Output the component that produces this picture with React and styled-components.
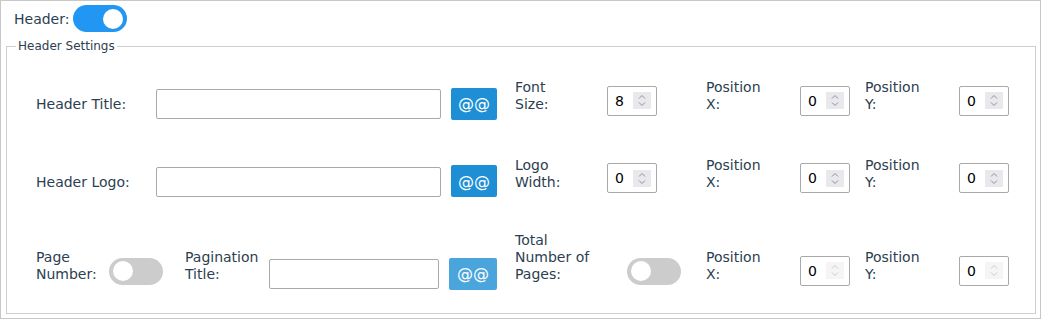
import React from 'react';
import styled, { createGlobalStyle } from 'styled-components';

const GlobalStyle = createGlobalStyle`
  body {
    margin: 0;
    background: #fff;
    font-family: "DejaVu Sans", "Liberation Sans", sans-serif;
    color: #2c3e50;
  }
  * { box-sizing: border-box; }
`;

const Page = styled.div`
  width: 1041px;
  height: 319px;
  border: 1px solid #c8c8c8;
  padding: 4px 4px 4px 5px;
  display: flex;
  flex-direction: column;
`;

const HeaderBar = styled.div`
  display: flex;
  align-items: center;
  gap: 4px;
  padding-left: 8px;
  font-size: 14px;
`;

const Settings = styled.fieldset`
  margin: 7px 0 0 0;
  min-width: 0;
  flex: 1;
  border: 1px solid #cfcfcf;
  padding: 26px 9px 0 29px;
  display: flex;
  flex-direction: column;
  gap: 37px;
`;

const Legend = styled.legend`
  font-size: 12px;
  padding: 0 2px;
  margin-left: -20px;
  color: #2c3e50;
`;

const Row = styled.div`
  display: flex;
  align-items: last baseline;
  font-size: 14px;
  margin-top: ${({ $mt }) => $mt || 0}px;
`;

const Label = styled.label`
  width: ${({ $w }) => $w}px;
  margin-left: ${({ $ml }) => $ml || 0}px;
  margin-right: ${({ $mr }) => $mr || 0}px;
  line-height: 17px;
  color: #2c3e50;
  flex-shrink: 0;
`;

const TextInput = styled.input`
  width: ${({ $w }) => $w}px;
  height: 30px;
  border: 1px solid #a9a9a9;
  border-radius: 2px;
  padding: 0 6px;
  font: 14px "DejaVu Sans", sans-serif;
  flex-shrink: 0;
`;

const NumberBox = styled.div`
  display: flex;
  align-items: center;
  width: 50px;
  height: 30px;
  border: 1px solid #a9a9a9;
  border-radius: 2px;
  padding: 0 5px 0 7px;
  flex-shrink: 0;
`;

const NumberValue = styled.input`
  flex: 1;
  min-width: 0;
  border: none;
  outline: none;
  padding: 0;
  font: 14px "DejaVu Sans", sans-serif;
  color: #000;
  background: transparent;
  -moz-appearance: textfield;
  &::-webkit-inner-spin-button,
  &::-webkit-outer-spin-button {
    -webkit-appearance: none;
    margin: 0;
  }
`;

const Spinner = styled.svg`
  flex-shrink: 0;
  opacity: ${({ $faded }) => ($faded ? 0.45 : 1)};
`;

const NumberField = ({ value, faded }) => (
  <NumberBox>
    <NumberValue type="number" defaultValue={value} />
    <Spinner $faded={faded} width="18" height="17" viewBox="0 0 18 17">
      <rect width="18" height="17" fill="#e9e9ed" />
      <path d="M6 6.5 L9 3.5 L12 6.5" fill="none" stroke="#8f8f9d" strokeWidth="1" />
      <path d="M6 10.5 L9 13.5 L12 10.5" fill="none" stroke="#8f8f9d" strokeWidth="1" />
    </Spinner>
  </NumberBox>
);

const TagButton = styled.button`
  width: ${({ $w }) => $w}px;
  height: 32px;
  margin-left: 10px;
  border: none;
  border-radius: 2px;
  background: #1e8fd5;
  opacity: ${({ $faded }) => ($faded ? 0.8 : 1)};
  color: #fff;
  font: 16px "DejaVu Sans", sans-serif;
  padding: 0;
  flex-shrink: 0;
`;

const Track = styled.span`
  display: flex;
  align-items: center;
  justify-content: ${({ $on }) => ($on ? 'flex-end' : 'flex-start')};
  width: 54px;
  height: 27px;
  padding: 0 4px;
  border-radius: 14px;
  background: ${({ $on }) => ($on ? '#2196f3' : '#cccccc')};
  margin-right: ${({ $mr }) => $mr || 0}px;
  flex-shrink: 0;
  ${({ $inRow }) => $inRow && 'align-self: flex-end; margin-bottom: 5px;'}
`;

const Knob = styled.span`
  width: 20px;
  height: 20px;
  border-radius: 50%;
  background: #fff;
`;

const Toggle = ({ on, mr, inRow }) => (
  <Track $on={on} $mr={mr} $inRow={inRow}>
    <Knob />
  </Track>
);

const Positions = ({ faded, ml = 49 }) => (
  <>
    <Label $w={60} $ml={ml} $mr={34}>Position X:</Label>
    <NumberField value={0} faded={faded} />
    <Label $w={60} $ml={15} $mr={34}>Position Y:</Label>
    <NumberField value={0} faded={faded} />
  </>
);

export default function App() {
  return (
    <>
      <GlobalStyle />
      <Page>
        <HeaderBar>
          <span>Header:</span>
          <Toggle on />
        </HeaderBar>
        <Settings>
          <Legend>Header Settings</Legend>
          <Row>
            <Label $w={120}>Header Title:</Label>
            <TextInput $w={285} />
            <TagButton $w={46}>@@</TagButton>
            <Label $w={60} $ml={18} $mr={32}>Font Size:</Label>
            <NumberField value={8} />
            <Positions />
          </Row>
          <Row>
            <Label $w={120}>Header Logo:</Label>
            <TextInput $w={285} />
            <TagButton $w={46}>@@</TagButton>
            <Label $w={60} $ml={18} $mr={32}>Logo Width:</Label>
            <NumberField value={0} />
            <Positions />
          </Row>
          <Row $mt={-2}>
            <Label $w={70} $mr={3}>Page Number:</Label>
            <Toggle mr={22} inRow />
            <Label $w={78} $mr={6}>Pagination Title:</Label>
            <TextInput $w={170} />
            <TagButton $w={48} $faded>@@</TagButton>
            <Label $w={80} $ml={18} $mr={32}>Total Number of Pages:</Label>
            <Toggle inRow />
            <Positions faded ml={25} />
          </Row>
        </Settings>
      </Page>
    </>
  );
}
